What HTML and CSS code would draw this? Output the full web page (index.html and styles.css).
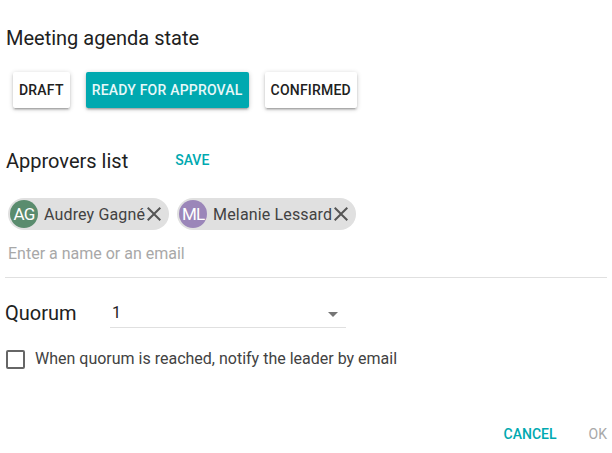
FILE: index.html
```html
<!DOCTYPE html>
<html>
<head>
<meta charset="utf-8">
<link rel="stylesheet" href="styles.css">
</head>
<body>
<div class="dialog">
  <h2 class="title">Meeting agenda state</h2>
  <div class="states">
    <button class="state">DRAFT</button>
    <button class="state active">READY FOR APPROVAL</button>
    <button class="state">CONFIRMED</button>
  </div>
  <div class="approvers-head">
    <h2 class="title">Approvers list</h2>
    <button class="flat teal">SAVE</button>
  </div>
  <div class="chips">
    <div class="chip">
      <span class="avatar green">AG</span>
      <span class="chip-name">Audrey Gagné</span>
      <svg class="chip-x" viewBox="0 0 24 24"><path d="M19 6.41 17.59 5 12 10.59 6.41 5 5 6.41 10.59 12 5 17.59 6.41 19 12 13.41 17.59 19 19 17.59 13.41 12z"/></svg>
    </div>
    <div class="chip">
      <span class="avatar purple">ML</span>
      <span class="chip-name">Melanie Lessard</span>
      <svg class="chip-x" viewBox="0 0 24 24"><path d="M19 6.41 17.59 5 12 10.59 6.41 5 5 6.41 10.59 12 5 17.59 6.41 19 12 13.41 17.59 19 19 17.59 13.41 12z"/></svg>
    </div>
  </div>
  <div class="input-wrap">
    <span class="placeholder">Enter a name or an email</span>
  </div>
  <div class="quorum">
    <span class="title">Quorum</span>
    <div class="select">
      <span class="select-value">1</span>
      <span class="caret"></span>
    </div>
  </div>
  <label class="check">
    <span class="box"></span>
    <span class="check-text">When quorum is reached, notify the leader by email</span>
  </label>
  <div class="actions">
    <button class="flat teal">CANCEL</button>
    <button class="flat disabled">OK</button>
  </div>
</div>
</body>
</html>
```
FILE: styles.css
```css
* { box-sizing: border-box; }
html, body {
  margin: 0;
  background: #fff;
  font-family: Roboto, "Liberation Sans", sans-serif;
  color: #212121;
}
.dialog {
  padding: 26px 5px 0 5px;
}
.title {
  margin: 0;
  font-size: 20px;
  font-weight: 400;
  line-height: 24px;
  color: #212121;
  padding-left: 1px;
}
.states {
  display: flex;
  gap: 16px;
  margin-top: 22px;
  padding-left: 8px;
}
.state {
  height: 36px;
  padding: 0 6px;
  border: 0;
  border-radius: 2px;
  background: #fff;
  font-family: inherit;
  font-size: 14px;
  font-weight: 500;
  letter-spacing: 0.2px;
  color: #212121;
  box-shadow: 0 2px 2px rgba(0,0,0,0.14), 0 3px 1px -2px rgba(0,0,0,0.12), 0 1px 5px rgba(0,0,0,0.2);
}
.state.active {
  background: #00a9b0;
  color: #e8f8f9;
}
.approvers-head {
  display: flex;
  align-items: center;
  margin-top: 41px;
}
.flat {
  border: 0;
  background: none;
  font-family: inherit;
  font-size: 14px;
  font-weight: 500;
  padding: 0;
  line-height: 20px;
}
.approvers-head .flat { margin-left: 47px; margin-top: -2px; }
.teal { color: #00a9b0; }
.disabled { color: #a8a8a8; font-weight: 400; }
.chips {
  display: flex;
  gap: 8px;
  margin-top: 25px;
  padding-left: 3px;
}
.chip {
  display: flex;
  align-items: center;
  height: 32px;
  border-radius: 16px;
  background: #e0e0e0;
  padding: 0 6px 0 2px;
}
.avatar {
  width: 28px;
  height: 28px;
  border-radius: 50%;
  color: #fff;
  font-size: 17px;
  display: flex;
  align-items: center;
  justify-content: center;
  letter-spacing: -0.8px;
}
.green { background: #5a8c6e; }
.purple { background: #9b86b9; }
.chip-name {
  margin-left: 6px;
  font-size: 16px;
  letter-spacing: 0.15px;
  color: #424242;
}
.chip-x {
  width: 24px;
  height: 24px;
  fill: #555;
  margin-left: -3px;
  margin-right: -3px;
}
.input-wrap {
  margin-top: 14px;
  padding: 0 0 13px 3px;
  border-bottom: 1px solid #e0e0e0;
  width: 602px;
}
.placeholder {
  display: block;
  font-size: 16px;
  line-height: 20px;
  color: #a8a8a8;
}
.quorum {
  display: flex;
  align-items: flex-start;
  margin-top: 23px;
}
.quorum .title { width: 105px; padding-left: 0; }
.select {
  width: 236px;
  height: 27px;
  border-bottom: 1px solid #e0e0e0;
  display: flex;
  align-items: flex-start;
  justify-content: space-between;
  padding: 2px 8px 0 2px;
}
.select-value {
  font-size: 16px;
  line-height: 20px;
  color: #212121;
}
.caret {
  width: 0;
  height: 0;
  border-left: 5px solid transparent;
  border-right: 5px solid transparent;
  border-top: 5px solid #757575;
  margin-top: 9px;
}
.check {
  display: flex;
  align-items: center;
  margin-top: 21px;
  padding-left: 1px;
}
.box {
  width: 19px;
  height: 19px;
  border: 2px solid #666;
  border-radius: 2px;
}
.check-text {
  margin-left: 10px;
  font-size: 16px;
  line-height: 20px;
  color: #424242;
}
.actions {
  display: flex;
  justify-content: flex-end;
  gap: 32px;
  margin-top: 55px;
  padding-right: 0;
}
```
